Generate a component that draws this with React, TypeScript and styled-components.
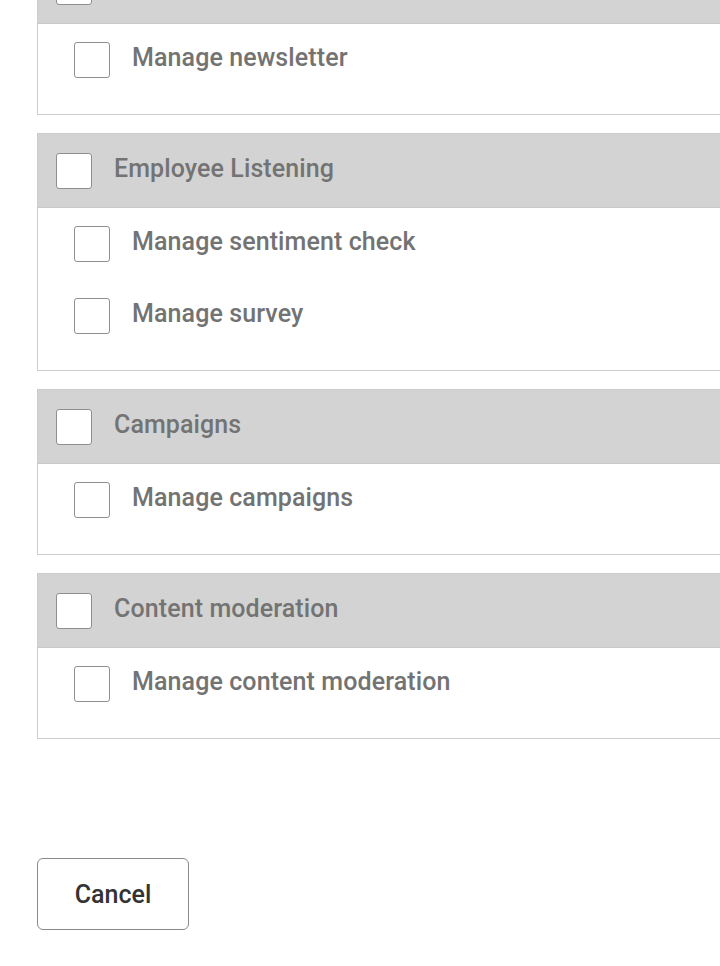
import React from 'react';
import styled, { createGlobalStyle } from 'styled-components';

interface Group {
  title?: string;
  items: string[];
}

const groups: Group[] = [
  { title: '', items: ['Manage newsletter'] },
  { title: 'Employee Listening', items: ['Manage sentiment check', 'Manage survey'] },
  { title: 'Campaigns', items: ['Manage campaigns'] },
  { title: 'Content moderation', items: ['Manage content moderation'] },
];

const GlobalStyle = createGlobalStyle`
  html, body {
    margin: 0;
    padding: 0;
    background: #ffffff;
    font-family: Roboto, "Liberation Sans", Arial, sans-serif;
    overflow: hidden;
  }
`;

// page is shown scrolled, so the first card starts above the top edge
const Page = styled.div`
  padding: 0 0 0 37px;
  margin-top: -51px;
  width: 740px;
  height: 1017px;
  box-sizing: border-box;
  display: flex;
  flex-direction: column;
`;

const Card = styled.section`
  border: 1px solid #cccccc;
  border-right: none;
  margin-bottom: 18px;
  background: #ffffff;
`;

const CardHeader = styled.div`
  height: 73px;
  background: #d3d3d3;
  border-bottom: 1px solid #c8c8c8;
  display: flex;
  align-items: center;
  gap: 22px;
  padding-left: 18px;
`;

const CardBody = styled.div`
  padding: 18px 0 0 36px;
  display: flex;
  flex-direction: column;
`;

const Row = styled.label`
  display: flex;
  align-items: center;
  gap: 22px;
  height: 36px;
  margin-bottom: 36px;
`;

const Box = styled.span`
  width: 36px;
  height: 36px;
  box-sizing: border-box;
  border: 1px solid #8f8f8f;
  border-radius: 3px;
  background: #ffffff;
  flex-shrink: 0;
`;

const Label = styled.span<{ $head?: boolean }>`
  font-size: 25px;
  letter-spacing: 0.1px;
  font-weight: 500;
  color: #737373;
  white-space: nowrap;
  position: relative;
  top: ${p => (p.$head ? '-2px' : '-3px')};
`;

const Footer = styled.div`
  margin-top: 101px;
`;

const CancelButton = styled.button`
  width: 152px;
  height: 72px;
  border: 1px solid #8a8a8a;
  border-radius: 6px;
  background: #ffffff;
  font-family: Roboto, "Liberation Sans", Arial, sans-serif;
  font-size: 25px;
  font-weight: 500;
  color: #333333;
  cursor: pointer;
`;

const App: React.FC = () => {
  return (
    <>
      <GlobalStyle />
      <Page>
        {groups.map((g, i) => (
          <Card key={i}>
            <CardHeader>
              <Box />
              <Label $head>{g.title}</Label>
            </CardHeader>
            <CardBody>
              {g.items.map(item => (
                <Row key={item}>
                  <Box />
                  <Label>{item}</Label>
                </Row>
              ))}
            </CardBody>
          </Card>
        ))}
        <Footer>
          <CancelButton>Cancel</CancelButton>
        </Footer>
      </Page>
    </>
  );
};

export default App;
